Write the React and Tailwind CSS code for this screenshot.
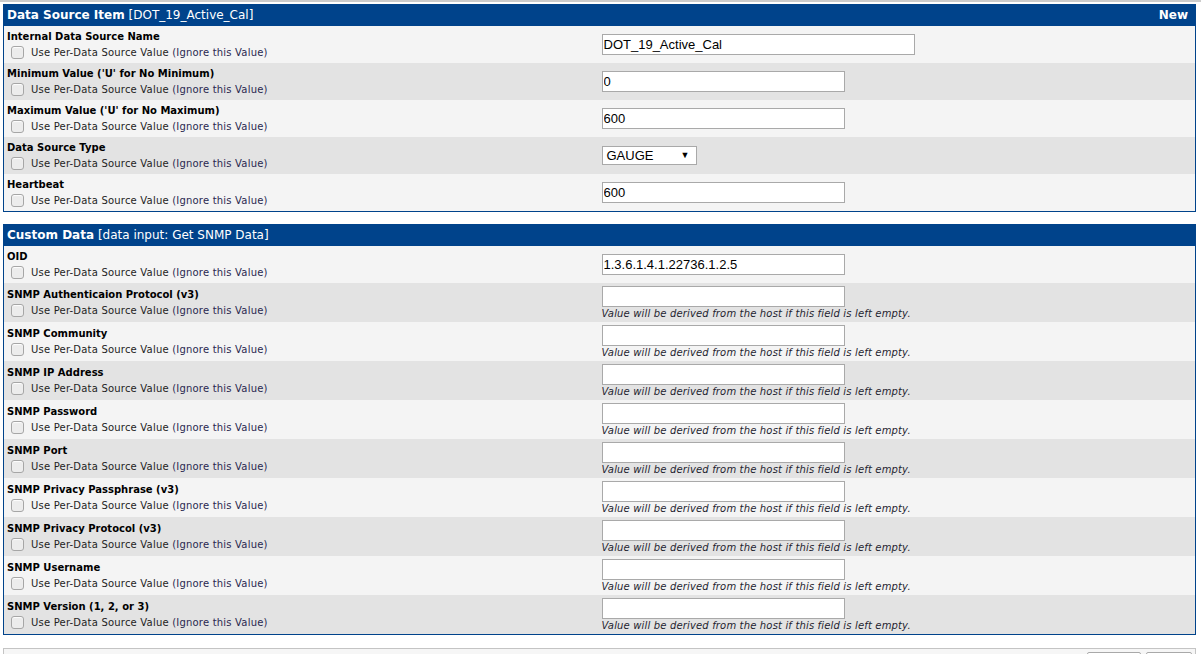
import React from 'react';

const sourceRows = [
  { label: 'Internal Data Source Name', value: 'DOT_19_Active_Cal', wide: true },
  { label: "Minimum Value ('U' for No Minimum)", value: '0' },
  { label: "Maximum Value ('U' for No Maximum)", value: '600' },
  { label: 'Data Source Type', select: 'GAUGE' },
  { label: 'Heartbeat', value: '600' },
];

const customRows = [
  { label: 'OID', value: '1.3.6.1.4.1.22736.1.2.5' },
  { label: 'SNMP Authenticaion Protocol (v3)', value: '', hint: true },
  { label: 'SNMP Community', value: '', hint: true },
  { label: 'SNMP IP Address', value: '', hint: true },
  { label: 'SNMP Password', value: '', hint: true },
  { label: 'SNMP Port', value: '', hint: true },
  { label: 'SNMP Privacy Passphrase (v3)', value: '', hint: true },
  { label: 'SNMP Privacy Protocol (v3)', value: '', hint: true },
  { label: 'SNMP Username', value: '', hint: true },
  { label: 'SNMP Version (1, 2, or 3)', value: '', hint: true },
];

function FormRow({ row, dark }) {
  return (
    <div className={`grid grid-cols-2 ${row.hint ? 'h-[39px]' : 'h-[37px]'} ${dark ? 'bg-[#e3e3e3]' : 'bg-[#f4f4f4]'}`}>
      <div className="flex flex-col justify-center pl-[3px]">
        <div className="h-[16px] leading-[17px] text-[10px] font-bold text-black">{row.label}</div>
        <label className="flex items-center h-[18px] pl-[4px]">
          <input
            type="checkbox"
            className="appearance-none w-[13px] h-[13px] m-0 rounded-[3px] border border-[#a6a6a6] bg-[#ececec] shadow-[inset_0_1px_1px_rgba(255,255,255,0.9)]"
          />
          <span className="ml-[7px] text-[10px] tracking-[0.2px] text-[#1e1e1e]">
            Use Per-Data Source Value <span className="text-[#2a2850]">(Ignore this Value)</span>
          </span>
        </label>
      </div>
      <div className="flex flex-col justify-center pl-[2px]">
        {row.select ? (
          <div className="flex items-center justify-between w-[95px] h-[19px] bg-white border border-[#a9a9a9] pl-[4px] pr-[6px] text-[13px] text-black font-['Liberation_Sans',Arial,sans-serif]">
            <span>{row.select}</span>
            <span className="text-[9px]">▼</span>
          </div>
        ) : (
          <input
            type="text"
            defaultValue={row.value}
            className={`${row.wide ? 'w-[313px]' : 'w-[243px]'} h-[21px] bg-white border border-[#a9a9a9] px-[1px] text-[13px] text-black outline-none font-['Liberation_Sans',Arial,sans-serif]`}
          />
        )}
        {row.hint && (
          <div className="h-[12px] leading-[12px] text-[10px] italic tracking-[0.16px] text-[#1f2430] mt-[1px]">
            Value will be derived from the host if this field is left empty.
          </div>
        )}
      </div>
    </div>
  );
}

function Panel({ title, sub, right, rows }) {
  return (
    <div className="ml-[3px] w-[1193px] border border-t-0 border-[#00438b]">
      <div className="flex items-center justify-between h-[22px] bg-[#00438b] px-[3px] text-white text-[12px]">
        <div>
          <span className="font-bold">{title}</span> <span>{sub}</span>
        </div>
        {right && <span className="font-bold pr-[4px]">{right}</span>}
      </div>
      {rows.map((row, i) => (
        <FormRow key={row.label} row={row} dark={i % 2 === 1} />
      ))}
    </div>
  );
}

export default function App() {
  return (
    <div className="w-[1201px] h-[654px] overflow-hidden bg-white font-['DejaVu_Sans',Verdana,sans-serif]">
      <div className="h-[2px] bg-[#cccccc]"></div>
      <div className="pt-[2px]">
        <Panel title="Data Source Item" sub="[DOT_19_Active_Cal]" right="New" rows={sourceRows} />
      </div>
      <div className="pt-[12px]">
        <Panel title="Custom Data" sub="[data input: Get SNMP Data]" rows={customRows} />
      </div>
      <div className="mt-[13px] ml-[3px] w-[1193px] h-[30px] border border-[#c4c4c4] bg-[#f6f6f6] flex justify-end gap-[5px] pt-[3px] pr-[3px]">
        <button type="button" aria-label="Cancel" className="w-[54px] h-[24px] rounded-[2px] border border-[#a9a9a9] bg-white"></button>
        <button type="button" aria-label="Save" className="w-[46px] h-[24px] rounded-[2px] border border-[#a9a9a9] bg-white"></button>
      </div>
    </div>
  );
}
